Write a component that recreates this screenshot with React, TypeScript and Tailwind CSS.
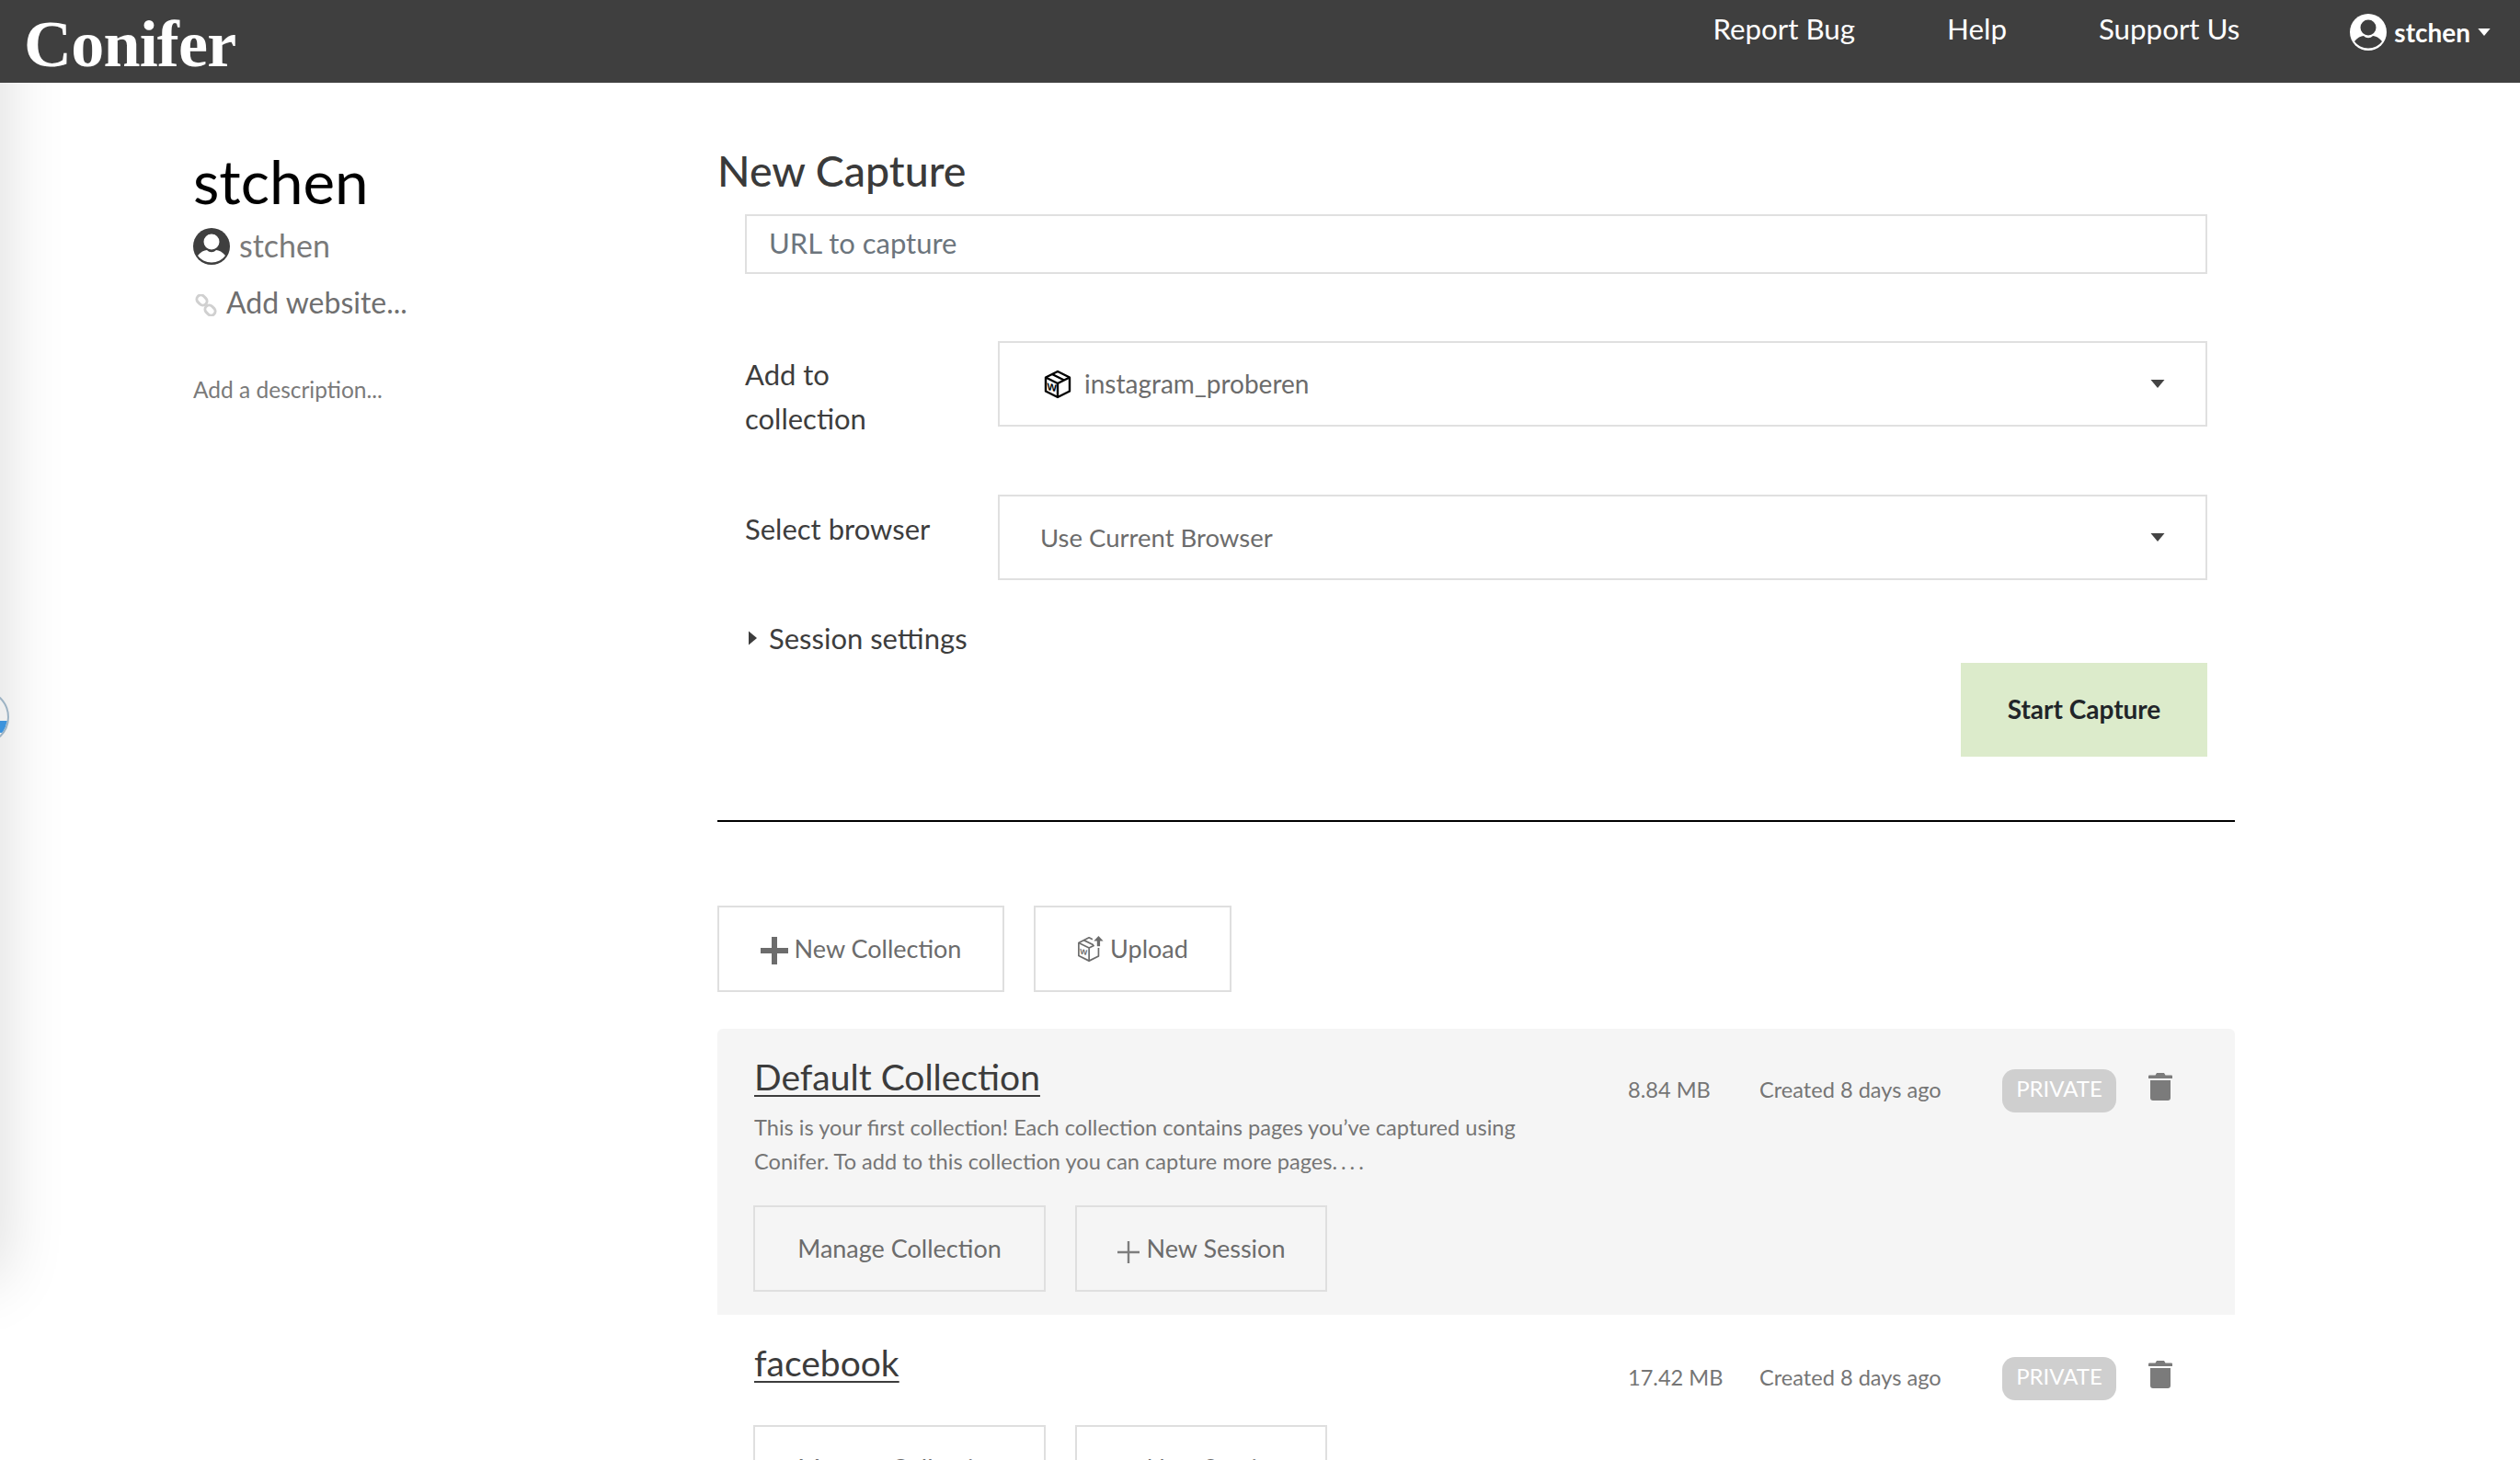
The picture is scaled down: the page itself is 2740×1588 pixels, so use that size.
import { ReactNode } from 'react';

function Avatar({ className, bg, fg }: { className: string; bg: string; fg: string }) {
  return (
    <svg viewBox="0 0 40 40" className={className}>
      <circle cx="20" cy="20" r="20" fill={bg} />
      <circle cx="20" cy="15" r="8.500" fill={fg} />
      <path d="M5 30c3-4 7-6 10-6 3 3 7 3 10 0 3 0 7 2 10 6-3 4.500-9 7.500-15 7.500S8 34.500 5 30z" fill={fg} />
    </svg>
  );
}

function Caret({ className }: { className: string }) {
  return (
    <svg viewBox="0 0 10 6" className={className}>
      <path d="M0 0h10L5 6z" fill="currentColor" />
    </svg>
  );
}

function BoxIcon({ className }: { className: string }) {
  return (
    <svg viewBox="0 0 32 32" className={className} fill="none" stroke="currentColor" strokeWidth="2.400" strokeLinejoin="round">
      <path d="M16 2 29 8.500v15L16 30 3 23.500v-15z" />
      <path d="M3 8.500 16 15l13-6.500M16 15v15M10 5l13 6.500" />
      <text x="4.500" y="23" fontSize="11" fontWeight="700" fill="currentColor" stroke="none" fontFamily="Liberation Sans, sans-serif" transform="skewY(12) translate(0 -2)">W</text>
    </svg>
  );
}

function UploadBoxIcon({ className }: { className: string }) {
  return (
    <svg viewBox="0 0 32 32" className={className} fill="none" stroke="currentColor" strokeWidth="1.800" strokeLinejoin="round">
      <path d="M18 5 14 3 2 9v15l12 6 11-5.500V15" />
      <path d="M2 9l12 6 6-3M14 15v15M8 6l11 5.500" />
      <text x="3.500" y="23" fontSize="9" fontWeight="700" fill="currentColor" stroke="none" fontFamily="Liberation Sans, sans-serif" transform="skewY(12) translate(0 -2)">W</text>
      <path d="M25 13V4" strokeWidth="3.500" />
      <path d="M19.500 7 25 1l5.500 6z" fill="currentColor" stroke="none" />
    </svg>
  );
}

function LinkIcon({ className }: { className: string }) {
  return (
    <svg viewBox="0 0 24 24" className={className} fill="none" stroke="#d0d0d0" strokeWidth="3">
      <rect x="1.500" y="2" width="12" height="9" rx="4.500" transform="rotate(45 7.500 6.500)" />
      <rect x="10.500" y="13" width="12" height="9" rx="4.500" transform="rotate(45 16.500 17.500)" />
    </svg>
  );
}

function TrashIcon() {
  return (
    <svg viewBox="0 0 26 30" className="w-[26px] h-[30px] text-[#7b7b7b]" fill="currentColor">
      <path d="M9 0h8l1.500 2.500H25a1 1 0 0 1 1 1V6H0V3.500a1 1 0 0 1 1-1h6.500z" />
      <path d="M2 8h22v19a3 3 0 0 1-3 3H5a3 3 0 0 1-3-3z" />
    </svg>
  );
}

function OutlineButton({ width, children }: { width: string; children: ReactNode }) {
  return (
    <div className={`${width} h-[94px] border-2 border-[#dfdfdf] flex items-center justify-center text-[27px] text-[#6c6c6c]`}>
      {children}
    </div>
  );
}

function PlusIcon({ thick }: { thick?: boolean }) {
  return (
    <svg viewBox="0 0 30 30" className={thick ? 'w-[30px] h-[30px] mt-1 mr-[7px] text-[#6c6c6c]' : 'w-[24px] h-[24px] mt-2 mr-[8px] text-[#7d7d7d]'} fill="currentColor">
      {thick ? <path d="M12 0h6v12h12v6H18v12h-6V18H0v-6h12z" /> : <path d="M13.500 0h3v13.500H30v3H16.500V30h-3V16.500H0v-3h13.500z" />}
    </svg>
  );
}

type CollectionRowProps = {
  title: string;
  size: string;
  description?: ReactNode;
  shaded?: boolean;
};

function CollectionRow({ title, size, description, shaded }: CollectionRowProps) {
  return (
    <div className={`flex pl-[40px] pt-[28px] pb-[25px] rounded-t-[6px] ${shaded ? 'bg-[#f5f5f5]' : ''}`}>
      <div className="w-[950px]">
        <div className="h-[48px] text-[39px] leading-[48px] text-[#3c3c3c] underline underline-offset-[5px] decoration-2">{title}</div>
        {description ? (
          <div className="mt-[13px] text-[23.600px] leading-[37px] text-[#757575]">{description}</div>
        ) : null}
        <div className={`flex gap-[32px] -ml-[1px] ${description ? 'mt-[29px]' : 'mt-[44px]'}`}>
          <OutlineButton width="w-[318px]">Manage Collection</OutlineButton>
          <OutlineButton width="w-[274px]">
            <PlusIcon />
            New Session
          </OutlineButton>
        </div>
      </div>
      <div className={`flex items-start ${description ? 'pt-[1px]' : 'pt-[3px]'}`}>
        <div className="w-[143px] pt-[22px] text-[23.600px] leading-[30px] text-[#757575]">{size}</div>
        <div className="w-[264px] pt-[22px] text-[23.600px] leading-[30px] text-[#757575]">Created 8 days ago</div>
        <div className="w-[124px] h-[47px] mt-[15px] rounded-[14px] bg-[#cfcfcf] text-white text-[24px] leading-[41px] text-center">PRIVATE</div>
        <div className="ml-[35px] mt-[19px]">
          <TrashIcon />
        </div>
      </div>
    </div>
  );
}

export default function App() {
  return (
    <div className="relative h-[1588px] overflow-hidden bg-white font-['Lato',sans-serif]">
      <nav className="relative z-10 h-[90px] bg-[#3f3f3f] text-white flex items-start pl-[26px]">
        <div className="text-[72px] leading-[90px] font-bold font-['Liberation_Serif',serif] mt-[3px] tracking-[-0.8px]">Conifer</div>
        <div className="ml-auto flex items-start pt-[11px] text-[31.300px] leading-[40px]">
          <span>Report Bug</span>
          <span className="ml-[100px]">Help</span>
          <span className="ml-[100px]">Support Us</span>
          <div className="ml-[120px] mr-[32px] mt-[4px] flex items-center">
            <Avatar className="w-[40px] h-[40px]" bg="#ffffff" fg="#3f3f3f" />
            <span className="ml-[8px] text-[28px] font-bold">stchen</span>
            <Caret className="ml-[8px] w-[14px] h-[8px]" />
          </div>
        </div>
      </nav>

      {/* side panel shadow and its handle */}
      <div className="absolute -left-[60px] top-0 w-[60px] h-[1390px] shadow-[0_0_70px_0_rgba(0,0,0,0.16)]" />
      <div className="absolute -left-[50px] top-[750px] w-[60px] h-[60px] rounded-full border-2 border-[#9db3c4] bg-[#efefef] overflow-hidden">
        <div className="mt-[32px] h-[13px] bg-[#3d93dc]" />
      </div>

      <main className="relative flex">
        <aside className="w-[780px] pl-[210px] pt-[67px]">
          <div className="text-[65.500px] leading-[80px] text-black">stchen</div>
          <div className="mt-[8px] flex items-center h-[44px]">
            <Avatar className="w-[40px] h-[40px] mt-[2px]" bg="#3f3f3f" fg="#ffffff" />
            <span className="ml-[10px] -mt-[2px] text-[34px] text-[#7a7a7a]">stchen</span>
          </div>
          <div className="mt-[18px] flex items-center h-[44px]">
            <LinkIcon className="w-[24px] h-[24px] mt-[6px] ml-[2px]" />
            <span className="ml-[10px] text-[32px] text-[#6f6f6f]">Add website...</span>
          </div>
          <div className="mt-[58px] text-[24.500px] leading-[30px] text-[#7a7a7a]">Add a description...</div>
        </aside>

        <section className="w-[1650px] pt-[70px]">
          <h1 className="text-[46.500px] leading-[50px] font-medium text-[#3a3a3a]">New Capture</h1>
          <div className="ml-[30px] w-[1590px]">
            <div className="mt-[23px] h-[65px] border-2 border-[#e0e0e0] pl-[24px] pb-[2px] flex items-center text-[31px] text-[#6c757d]">URL to capture</div>
            <div className="mt-[73px] flex">
              <div className="w-[275px] text-[31px] leading-[48px] text-[#3d3d3d] pt-[12px]">
                Add to
                <br />
                collection
              </div>
              <div className="flex-1 h-[93px] border-2 border-[#e0e0e0] pl-[47px] pr-[44px] flex items-center text-[28px] text-[#6c6c6c]">
                <BoxIcon className="w-[32px] h-[32px] mr-[13px] text-black" />
                <span className="-mt-[2px]">instagram_proberen</span>
                <Caret className="ml-auto w-[16px] h-[9px] text-[#444444]" />
              </div>
            </div>
            <div className="mt-[59px] flex">
              <div className="w-[275px] text-[31px] leading-[48px] text-[#3d3d3d] pt-[13px]">Select browser</div>
              <div className="flex-1 h-[93px] border-2 border-[#e0e0e0] pl-[44px] pr-[44px] flex items-center text-[27.500px] text-[#6c6c6c]">
                Use Current Browser
                <Caret className="ml-auto w-[16px] h-[9px] text-[#444444]" />
              </div>
            </div>
            <div className="mt-[40px] flex items-center h-[46px] text-[31px] text-[#3d3d3d]">
              <svg viewBox="0 0 6 10" className="w-[9px] h-[16px] ml-[4px] mr-[13px] text-[#3d3d3d]">
                <path d="M0 0v10l6-5z" fill="currentColor" />
              </svg>
              Session settings
            </div>
            <div className="mt-[4px] flex justify-end">
              <div className="w-[268px] h-[102px] bg-[#dcebcb] pb-[2px] flex items-center justify-center text-[28px] font-bold text-[#212529]">Start Capture</div>
            </div>
          </div>
          <div className="mt-[69px] h-[2px] bg-black" />
          <div className="mt-[91px] flex gap-[32px]">
            <OutlineButton width="w-[312px]">
              <PlusIcon thick />
              New Collection
            </OutlineButton>
            <OutlineButton width="w-[215px]">
              <UploadBoxIcon className="w-[30px] h-[30px] mr-[6px] text-[#6c6c6c]" />
              Upload
            </OutlineButton>
          </div>
          <div className="mt-[40px]">
            <CollectionRow
              shaded
              title="Default Collection"
              size="8.84 MB"
              description={
                <>
                  <div>This is your first collection! Each collection contains pages you’ve captured using</div>
                  <div>
                    Conifer. To add to this collection you can capture more pages<span className="tracking-[4px]">....</span>
                  </div>
                </>
              }
            />
            <CollectionRow title="facebook" size="17.42 MB" />
          </div>
        </section>
      </main>
    </div>
  );
}
